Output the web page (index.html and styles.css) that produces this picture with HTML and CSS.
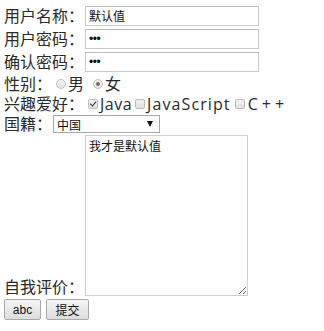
FILE: index.html
```html
<!DOCTYPE html>
<html>
<head>
<meta charset="utf-8">
<link rel="stylesheet" href="styles.css">
</head>
<body>
<form class="form">
  <div class="row row-input">
    <span class="label">用户名称：</span>
    <input class="text" type="text" value="默认值">
  </div>
  <div class="row row-input">
    <span class="label">用户密码：</span>
    <input class="text pw" type="password" value="123">
  </div>
  <div class="row row-input">
    <span class="label">确认密码：</span>
    <input class="text pw" type="password" value="123">
  </div>
  <div class="row row-radio">
    <span class="label">性别：</span>
    <input class="radio" type="radio" name="sex"><span class="opt">男</span>
    <input class="radio" type="radio" name="sex" checked><span class="opt">女</span>
  </div>
  <div class="row row-check">
    <span class="label">兴趣爱好：</span>
    <input class="check" type="checkbox" checked><span class="opt java">Java</span>
    <input class="check" type="checkbox"><span class="opt js">JavaScript</span>
    <input class="check" type="checkbox"><span class="opt cpp">C++</span>
  </div>
  <div class="row row-select">
    <span class="label">国籍：</span>
    <span class="select-wrap">
      <select class="select"><option>中国</option></select>
    </span>
  </div>
  <div class="row row-area">
    <span class="label">自我评价：</span>
    <textarea class="area">我才是默认值</textarea>
  </div>
  <div class="row row-btn">
    <button type="button" class="btn btn-abc">abc</button>
    <button type="button" class="btn btn-submit">提交</button>
  </div>
</form>
</body>
</html>
```
FILE: styles.css
```css
html, body {
  margin: 0;
  padding: 0;
  background: #fff;
}
body {
  font-family: "Open Sans", "Noto Sans CJK SC", sans-serif;
  font-size: 16px;
  color: #2a2a2a;
}
.form {
  padding: 4px 0 0 4px;
}
.row {
  display: flex;
  align-items: center;
  white-space: nowrap;
  line-height: 18px;
}
.row-input {
  height: 23px;
}
.label {
  line-height: 18px;
}
.text {
  box-sizing: border-box;
  width: 174px;
  height: 20px;
  margin: 0 0 0 1px;
  padding: 1px 3px;
  border: 1px solid #cacaca;
  border-top-color: #bdbdbd;
  font-family: "Noto Sans CJK SC", sans-serif;
  font-size: 12px;
  color: #111;
  outline: none;
}
.pw {
  font-family: "Liberation Sans", sans-serif;
  font-size: 12px;
  letter-spacing: -0.5px;
  padding-left: 3px;
}
.row-radio {
  height: 20px;
  margin-top: 1px;
}
.radio {
  -webkit-appearance: none;
  appearance: none;
  box-sizing: border-box;
  position: relative;
  width: 10px;
  height: 10px;
  margin: 0 2px 0 4px;
  border: 1px solid #bdbdbd;
  border-radius: 50%;
  background: linear-gradient(#f4f4f4, #e2e2e2);
}
.radio:checked::after {
  content: "";
  position: absolute;
  left: 2px;
  top: 2px;
  width: 4px;
  height: 4px;
  border-radius: 50%;
  background: #707070;
}
.opt + .radio {
  margin-left: 9px;
}
.row-check {
  height: 19px;
}
.check {
  -webkit-appearance: none;
  appearance: none;
  box-sizing: border-box;
  position: relative;
  width: 10px;
  height: 10px;
  margin: 0 2px 0 4px;
  border: 1px solid #bdbdbd;
  border-radius: 2px;
  background: linear-gradient(#f4f4f4, #e0e0e0);
}
.check:checked::after {
  content: "";
  position: absolute;
  left: 2px;
  top: 0px;
  width: 3px;
  height: 5px;
  border-right: 1.6px solid #333;
  border-bottom: 1.6px solid #333;
  transform: rotate(40deg);
}
.opt + .check {
  margin-left: 3px;
}
.java {
  letter-spacing: 0.5px;
}
.js {
  letter-spacing: 1.1px;
}
.opt.js + .check {
  margin-left: 4px;
}
.cpp {
  letter-spacing: 4px;
  margin-left: 1px;
}
.row-select {
  height: 22px;
}
.select-wrap {
  position: relative;
  display: inline-block;
  margin-left: 1px;
}
.select-wrap::after {
  content: "";
  position: absolute;
  right: 7px;
  top: 6px;
  border-left: 3.5px solid transparent;
  border-right: 3.5px solid transparent;
  border-top: 6px solid #111;
  pointer-events: none;
}
.select {
  display: block;
  box-sizing: border-box;
  width: 107px;
  height: 18px;
  font-family: "Noto Sans CJK SC", sans-serif;
  font-size: 12px;
  border: 1px solid #a8a8a8;
  border-radius: 0;
  background: #fff;
  color: #111;
  padding: 0 3px;
  -webkit-appearance: none;
  appearance: none;
}
.row-area {
  align-items: flex-end;
}
.area {
  box-sizing: border-box;
  width: 163px;
  height: 161px;
  margin: 0 0 0 1px;
  padding: 2px 3px;
  border: 1px solid #cfcfcf;
  font-family: "Noto Sans CJK SC", sans-serif;
  font-size: 12px;
  line-height: 16px;
  color: #111;
  resize: both;
}
.row-btn {
  margin-top: 3px;
  gap: 5px;
}
.btn {
  box-sizing: border-box;
  height: 21px;
  padding: 0 5px;
  border: 1px solid #a9a9a9;
  border-radius: 2px;
  background: linear-gradient(#f6f6f6, #dcdcdc);
  font-family: "Liberation Sans", "Noto Sans CJK SC", sans-serif;
  font-size: 12px;
  color: #111;
}
.btn-abc {
  width: 37px;
}
.btn-submit {
  width: 43px;
}
```
